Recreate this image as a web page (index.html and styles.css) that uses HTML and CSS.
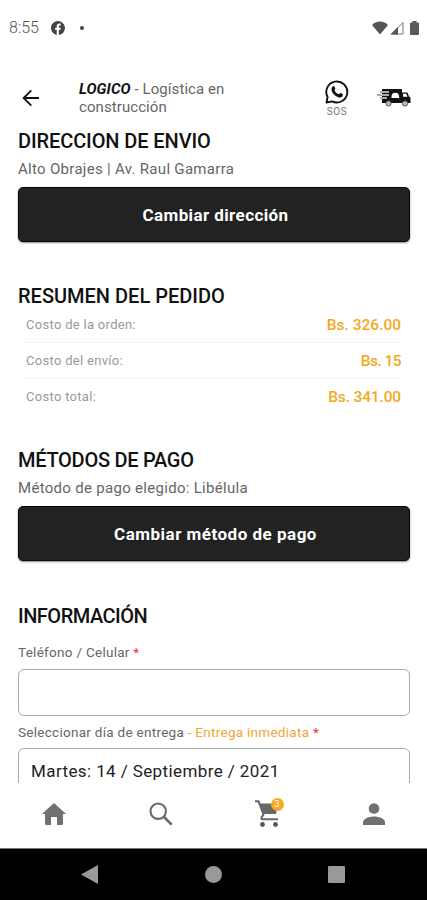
FILE: index.html
```
<!DOCTYPE html>
<html lang="es">
<head>
<meta charset="utf-8">
<title>Logico</title>
<link rel="stylesheet" href="styles.css">
</head>
<body>
<div class="screen">
  <header class="status">
    <span class="clock">8:55</span>
    <svg class="fb" viewBox="0 0 24 24" width="14" height="14"><path fill="#444" d="M12 0a12 12 0 0 0-2.200 23.800V15H7v-3.600h2.800V9c0-3 1.800-4.600 4.500-4.600 1.200 0 2.400.2 2.400.2v2.900h-1.400c-1.400 0-1.800.8-1.800 1.700v2.200h3.100L16.100 15h-2.600v8.900A12 12 0 0 0 12 0z"/></svg>
    <span class="dot"></span>
    <span class="signals">
      <svg width="16" height="14" viewBox="0 0 16 14"><path fill="#555" d="M0 4C4-.8 12-.8 16 4L8 13.500z"/></svg>
      <svg width="14" height="14" viewBox="0 0 14 14"><path fill="none" stroke="#777" d="M1.500 13 13 1.500V13z"/><path fill="#555" d="M.5 13.500 8 6v7.500z"/></svg>
      <svg width="9" height="14" viewBox="0 0 9 14"><path fill="#5a5a5a" d="M2.500 0h4v1.500H8q1 0 1 1V13q0 1-1 1H1q-1 0-1-1V2.500q0-1 1-1h1.500z"/></svg>
    </span>
  </header>
  <div class="appbar">
    <svg class="back" width="18" height="18" viewBox="0 0 18 18"><path fill="none" stroke="#111" stroke-width="1.800" d="M17 9H2M9.300 1.300 1.600 9l7.700 7.700"/></svg>
    <p class="title"><b>LOGICO</b> - Logística en<br>construcción</p>
    <div class="sos">
      <svg width="24" height="24" viewBox="0 0 24 24"><path fill="none" stroke="#111" stroke-width="1.900" stroke-linejoin="round" d="M1.500 22.500 2.600 17A10.500 10.500 0 1 1 7.200 21.400z"/><path fill="#111" d="M8 6.300c.4-.4 1.200-.3 1.400.2l.9 2.100c.2.500-.8 1.400-.8 1.700.7 1.900 2.300 3.200 4.200 4 .5.100 1.300-1.400 1.800-1.200l2.100 1c.5.300.4 1.500-.1 2.100-1 1.200-2.600 1.500-4.200 1-3.700-1.200-6.200-4-6.800-7.200-.2-1.400.4-2.800 1.500-3.700z"/></svg>
      <span>SOS</span>
    </div>
    <svg class="truck" width="34" height="19" viewBox="0 0 34 19"><path fill="#111" d="M5 1h20v3.500h5.500L32 8.500l1.500 1V15H31a3.500 3.500 0 0 0-6 0H14.500a3.500 3.500 0 0 0-6 0H5V9z"/><path fill="#fff" d="M14.500 8.500a3.800 3.800 0 0 1 7.600 0V10h-7.600zM26 5.800h3.300l1.200 3H26z"/><path stroke="#aaa" stroke-width="2" d="M3 4h9M0 7h12M3 10h7"/><circle cx="11.500" cy="15.500" r="2.600" fill="#bbb" stroke="#555"/><circle cx="28" cy="15.500" r="2.600" fill="#bbb" stroke="#555"/></svg>
  </div>
  <main class="content">
    <section class="address">
      <h2 class="h-a">DIRECCION DE ENVIO</h2>
      <p class="sub">Alto Obrajes | Av. Raul Gamarra</p>
      <button class="btn b-a">Cambiar dirección</button>
    </section>
    <section class="summary">
      <h2>RESUMEN DEL PEDIDO</h2>
      <div class="row"><span>Costo de la orden:</span><strong>Bs. 326.00</strong></div>
      <div class="row"><span>Costo del envío:</span><strong class="short">Bs. 15</strong></div>
      <div class="row"><span>Costo total:</span><strong class="total">Bs. 341.00</strong></div>
    </section>
    <section class="payment">
      <h2 class="h-c">MÉTODOS DE PAGO</h2>
      <p class="sub">Método de pago elegido: Libélula</p>
      <button class="btn b-c">Cambiar método de pago</button>
    </section>
    <section class="info">
      <h2 class="h-d">INFORMACIÓN</h2>
      <label class="f1">Teléfono / Celular <i>*</i></label>
      <div class="field"></div>
      <label class="f2">Seleccionar día de entrega <em>- Entrega inmediata</em> <i>*</i></label>
      <div class="field date"><span>Martes: 14 / Septiembre / 2021</span></div>
    </section>
  </main>
  <nav class="tabs">
    <div><svg width="24" height="22" viewBox="0 0 24 22"><path fill="#707070" d="M12 0 24 11h-3v9.500q0 1.500-1.500 1.500H15v-8H9v8H4.500Q3 22 3 20.500V11H0z"/></svg></div>
    <div><svg width="24" height="24" viewBox="0 0 24 24"><circle cx="9.200" cy="9.200" r="7.700" fill="none" stroke="#6a6a6a" stroke-width="2.100"/><path stroke="#6a6a6a" stroke-width="2.600" d="m15 15 7.700 7.700"/></svg></div>
    <div class="cart"><svg width="24" height="27" viewBox="0 0 24 27"><path fill="#686868" d="M4 3.500h19L21 14H8.500z"/><path fill="none" stroke="#686868" stroke-width="2" d="M0 1.300h3.500l5 13-2.200 3.700q0 1.200 1 1.200H23"/><circle cx="7.500" cy="24.500" r="2.400" fill="#555"/><circle cx="20.500" cy="24.500" r="2.400" fill="#555"/></svg><span class="badge">3</span></div>
    <div><svg width="22" height="22" viewBox="0 0 22 22"><circle cx="11" cy="5.500" r="5.300" fill="#707070"/><path fill="#707070" d="M0 22v-2.500c0-4 6-6 11-6s11 2 11 6V22z"/></svg></div>
  </nav>
  <footer class="sysbar">
    <svg width="17" height="19" viewBox="0 0 17 19"><path fill="#999" d="M17 0v19L0 9.500z"/></svg>
    <svg width="17" height="17" viewBox="0 0 17 17"><circle cx="8.500" cy="8.500" r="8.500" fill="#999"/></svg>
    <svg width="17" height="17" viewBox="0 0 17 17"><rect width="17" height="17" rx="1" fill="#999"/></svg>
  </footer>
</div>
</body>
</html>
```
FILE: styles.css
```
* { box-sizing: border-box; margin: 0; padding: 0; }
body { background: #fff; font-family: Roboto, "Liberation Sans", sans-serif; color: #111; }
.screen { width: 427px; height: 900px; display: flex; flex-direction: column; overflow: hidden; white-space: nowrap; }
.status { height: 55px; flex: none; display: flex; align-items: center; padding: 0 8px 0 9px; }
.clock { font-size: 16px; font-weight: 300; color: #555; width: 42px; }
.dot { width: 4px; height: 4px; border-radius: 50%; background: #444; margin-left: 15px; }
.signals { margin-left: auto; display: flex; gap: 4px; }
.signals svg:last-child { margin-left: 2px; }
.signals svg:first-child { margin-right: -2px; }
.appbar { height: 75px; flex: none; display: flex; align-items: flex-start; padding: 23px 16px 0 22px; }
.back { margin-top: 11px; }
.title { margin-left: 39px; margin-top: 3px; width: 246px; font-size: 15px; line-height: 17.500px; letter-spacing: .08px; color: #666; }
.title b { font-style: italic; color: #111; }
.sos { width: 24px; margin-top: 2px; display: flex; flex-direction: column; align-items: center; }
.sos span { font-size: 10px; line-height: 12px; margin-top: 2px; letter-spacing: .6px; color: #777; }
.truck { margin-left: 28px; margin-top: 10px; }
.content { height: 653px; flex: none; overflow: hidden; padding: 0 17px 0 18px; }
section { display: flex; flex-direction: column; }
.address { height: 155px; }
.summary { height: 164px; }
.payment { height: 156px; }
h2 { font-size: 20px; line-height: 22px; font-weight: 500; width: max-content; }
.h-a { letter-spacing: -.1px; }
.h-c { letter-spacing: -.27px; }
.h-d { letter-spacing: -.5px; }
.sub { font-size: 15px; line-height: 18px; margin-top: 8px; letter-spacing: .3px; color: #666; width: max-content; }
.btn { height: 55px; flex: none; margin-top: 9px; padding-left: 3px; border: 1px solid #0a0a0a; border-radius: 5px; background: #222; color: #fff; font: 700 17px Roboto, sans-serif; box-shadow: 0 1px 2px #0007; }
.b-a { letter-spacing: .4px; }
.b-c { letter-spacing: .5px; }
.row { height: 36px; margin: 0 9px 0 8px; border-bottom: 1px solid #f2f2f2; display: flex; justify-content: space-between; align-items: center; }
.summary .row:last-child { border: 0; padding-bottom: 1px; }
.row span { font-size: 13px; letter-spacing: .3px; color: #999; }
.row strong { font-size: 15.500px; font-weight: 500; color: #f3a81f; }
.row .short { letter-spacing: -.55px; }
.row .total { letter-spacing: -.15px; }
label { font-size: 13.500px; line-height: 16px; letter-spacing: .28px; color: #666; width: max-content; }
label i { color: #f03040; font-style: normal; }
label em { color: #f0a637; font-style: normal; }
.f1 { margin-top: 17px; }
.field { height: 47px; flex: none; border: 1px solid #aaa; border-radius: 6px; margin-top: 9px; }
.f2 { margin-top: 8px; }
.date { height: 60px; margin-top: 8px; padding: 11px 12px; font-size: 17px; line-height: 22px; letter-spacing: .4px; color: #222; }
.tabs { height: 66px; flex: none; display: grid; grid-template-columns: repeat(4, 1fr); border-bottom: 1px solid #777; }
.tabs div { display: flex; justify-content: center; align-items: center; padding: 0 0 4px 1px; }
.cart { position: relative; }
.badge { position: absolute; left: 57px; top: 15px; width: 13px; height: 13px; border-radius: 50%; background: #f6ab21; color: #fff; font-size: 9px; line-height: 13px; text-align: center; }
.sysbar { flex: 1; background: #000; display: flex; align-items: center; justify-content: space-between; padding: 0 82px 0 81px; }
```
